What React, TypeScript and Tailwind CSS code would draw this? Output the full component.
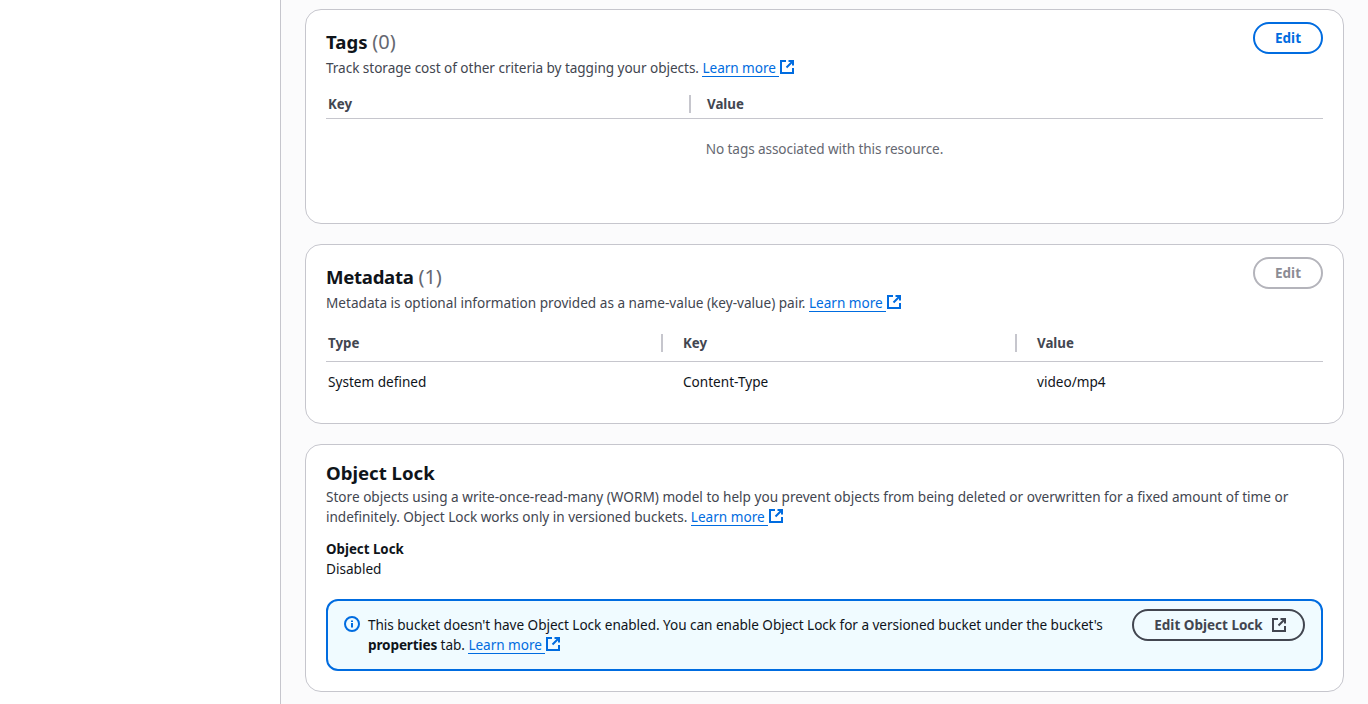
import type { ReactNode } from "react";

const ExternalIcon = ({ className }: { className: string }) => (
  <svg viewBox="0 0 16 16" fill="none" stroke="currentColor" strokeWidth="2" className={`inline-block w-4 h-4 ${className}`}>
    <path d="M14 9v5H2V2h5" strokeLinejoin="miter" />
    <path d="M9.5 2H14v4.5M14 2 7.5 8.5" />
  </svg>
);

const LearnMore = () => (
  <span className="text-[#006ce0] whitespace-nowrap">
    <a href="#" className="inline-block leading-[16px] border-b border-[#006ce0] pr-[3px]">Learn more</a>
    <ExternalIcon className="align-[-2px]" />
  </span>
);

const Edit = ({ disabled }: { disabled?: boolean }) => (
  <button className={`w-[70px] h-[32px] rounded-full border-2 text-[13.5px] font-bold bg-white ${disabled ? "border-[#b4b4bb] text-[#8c8c94]" : "border-[#006ce0] text-[#006ce0]"}`}>
    Edit
  </button>
);

const Card = ({ top, children }: { top: string; children: ReactNode }) => (
  <section className={`relative bg-white border border-[#c6c6cd] rounded-2xl px-5 ${top}`}>{children}</section>
);

const Th = ({ label, w, gap }: { label: string; w?: string; gap?: string }) => (
  <div className={`flex items-center h-[18px] ${w ?? "flex-1"}`}>
    {gap && <span className={`w-[2px] h-[18px] bg-[#c6c6cd] ${gap}`} />}
    <span className="font-bold text-[#424650] text-[13.3px] pt-[2px]">{label}</span>
  </div>
);

export default function App() {
  return (
    <div className="flex h-[704px] overflow-hidden bg-[#fbfbfc] text-[13.6px] text-[#0f141a] font-['Noto_Sans','Open_Sans',sans-serif]">
      <aside className="w-[281px] flex-none bg-white border-r border-[#c6c6cd]" />
      <main className="flex-1 pl-[24px] pr-[24px] pt-[9px] flex flex-col gap-[20px]">
        {/* Tags */}
        <Card top="h-[215px]">
          <div className="flex justify-between">
            <div>
              <h2 className="mt-[18px] text-[18.6px] leading-[28px] font-bold">Tags <span className="text-[20px] font-normal text-[#656871]">(0)</span></h2>
              <p className="leading-[20px] mt-[2px] text-[#424650] tracking-[-0.05px]">Track storage cost of other criteria by tagging your objects. <LearnMore /></p>
            </div>
            <div className="mt-[12px]"><Edit /></div>
          </div>
          <div className="flex mt-[17px] pl-[2px] pb-[5px] border-b border-[#c6c6cd]">
            <Th label="Key" w="w-[361px]" />
            <Th label="Value" gap="mr-[16px]" />
          </div>
          <p className="text-center text-[#656871] leading-[20px] mt-[20px] tracking-[-0.1px]">No tags associated with this resource.</p>
        </Card>

        {/* Metadata */}
        <Card top="h-[180px]">
          <div className="flex justify-between">
            <div>
              <h2 className="mt-[18px] text-[18.6px] leading-[28px] font-bold"><span className="tracking-[-0.3px]">Metadata</span> <span className="text-[20px] font-normal text-[#656871]">(1)</span></h2>
              <p className="leading-[20px] mt-[2px] text-[#424650]">Metadata is optional information provided as a name-value (key-value) pair. <LearnMore /></p>
            </div>
            <div className="mt-[12px]"><Edit disabled /></div>
          </div>
          <div className="flex mt-[21px] pl-[2px] pb-[9px] border-b border-[#c6c6cd]">
            <Th label="Type" w="w-[333px]" />
            <Th label="Key" w="w-[354px]" gap="mr-[20px]" />
            <Th label="Value" gap="mr-[20px]" />
          </div>
          <div className="flex mt-[10px] pl-[2px] leading-[20px]">
            <div className="w-[355px]">System defined</div>
            <div className="w-[354px]">Content-Type</div>
            <div>video/mp4</div>
          </div>
        </Card>

        {/* Object Lock */}
        <Card top="h-[248px]">
          <h2 className="mt-[14px] text-[18.6px] leading-[28px] font-bold">Object Lock</h2>
          <p className="leading-[20px] text-[#424650]">
            Store objects using a write-once-read-many (WORM) model to help you prevent objects from being deleted or overwritten for a fixed amount of time or <span className="tracking-[-0.03px]">indefinitely. Object Lock works only in versioned buckets.</span> <LearnMore />
          </p>
          <div className="mt-[12px] font-bold leading-[20px] text-[13.3px]">Object Lock</div>
          <div className="leading-[20px]">Disabled</div>
          <div className="mt-[20px] h-[72px] flex items-start border-2 border-[#006ce0] rounded-xl bg-[#f0fbff] pl-[16px] pr-[16px] pt-[8px]">
            <svg viewBox="0 0 16 16" fill="none" stroke="#006ce0" strokeWidth="2" className="w-4 h-4 flex-none mt-[7px] mr-[8px]">
              <circle cx="8" cy="8" r="7" />
              <path d="M8 11.5V7M8 6V4.5" />
            </svg>
            <p className="flex-1 leading-[20px] pt-[6px] tracking-[-0.05px]">
              This bucket doesn't have Object Lock enabled. You can enable Object Lock for a versioned bucket under the bucket's <b className="tracking-[-0.15px]">properties</b> tab. <LearnMore />
            </p>
            <button className="flex-none ml-[20px] w-[173px] h-[32px] pl-[4px] rounded-full border-2 border-[#424650] text-[#424650] font-bold text-[13.5px] flex items-center justify-center gap-[8px]">
              <span className="pt-[1px]">Edit Object Lock</span>
              <ExternalIcon className="" />
            </button>
          </div>
        </Card>
      </main>
    </div>
  );
}
